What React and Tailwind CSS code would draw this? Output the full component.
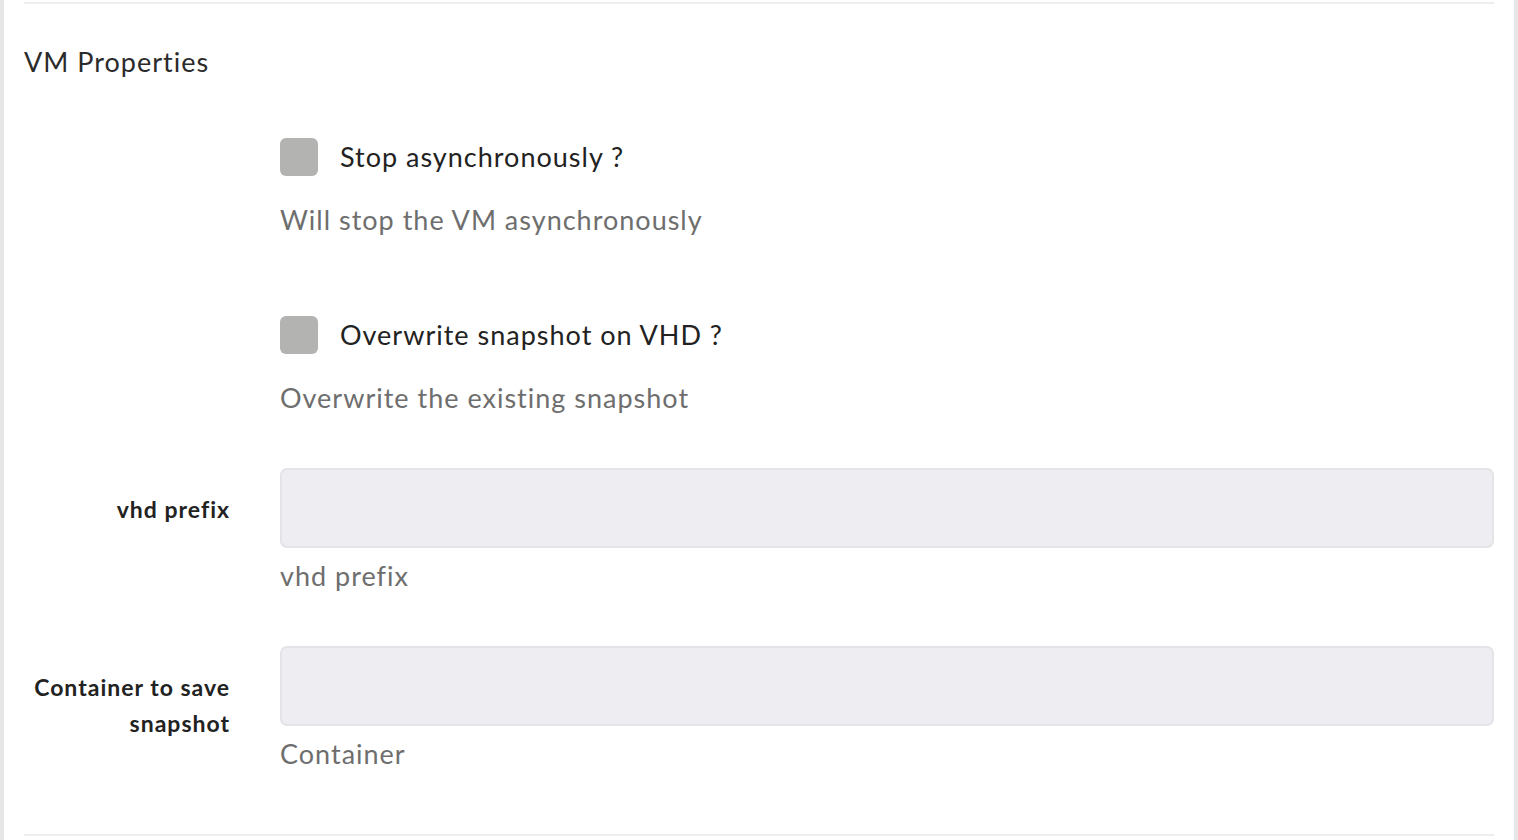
export default function App() {
  const font = { fontFamily: 'Lato, "Open Sans", sans-serif' };

  return (
    <div className="min-h-[840px] bg-white border-l-4 border-r-4 border-[#e6e6e6] px-5 tracking-[1px]" style={font}>
      <div className="pt-[2px]">
        <div className="h-[2px] bg-[#eeeeee]"></div>
      </div>

      {/* VM Properties */}
      <h2 className="mt-[40px] text-[27px] leading-[36px] text-[#2b2b2b]">VM Properties</h2>

      <div className="grid grid-cols-[256px_1fr]">
        {/* Stop asynchronously */}
        <div></div>
        <div className="mt-[58px]">
          <label className="flex items-center gap-[22px]">
            <span className="w-[38px] h-[38px] rounded-[6px] bg-[#b3b3b1] shrink-0"></span>
            <span className="text-[27px] leading-[38px] text-[#222]">Stop asynchronously ?</span>
          </label>
          <p className="mt-[26px] text-[27px] leading-[36px] text-[#6e6e6e]">Will stop the VM asynchronously</p>
        </div>

        {/* Overwrite snapshot */}
        <div></div>
        <div className="mt-[78px]">
          <label className="flex items-center gap-[22px]">
            <span className="w-[38px] h-[38px] rounded-[6px] bg-[#b3b3b1] shrink-0"></span>
            <span className="text-[27px] leading-[38px] text-[#222]">Overwrite snapshot on VHD ?</span>
          </label>
          <p className="mt-[26px] text-[27px] leading-[36px] text-[#6e6e6e]">Overwrite the existing snapshot</p>
        </div>

        {/* vhd prefix */}
        <div className="mt-[52px] pt-[23px] pr-[50px] text-right text-[23px] leading-[36px] font-bold text-[#222]">vhd prefix</div>
        <div className="mt-[52px]">
          <input type="text" className="block w-full h-[80px] rounded-[7px] border-2 border-[#e3e3e8] bg-[#eeeef2] px-4 outline-none" />
          <p className="mt-[10px] text-[27px] leading-[36px] text-[#6e6e6e]">vhd prefix</p>
        </div>

        {/* Container */}
        <div className="mt-[52px] pt-[23px] pr-[50px] text-right text-[23px] leading-[36px] font-bold text-[#222]">Container to save snapshot</div>
        <div className="mt-[52px]">
          <input type="text" className="block w-full h-[80px] rounded-[7px] border-2 border-[#e3e3e8] bg-[#eeeef2] px-4 outline-none" />
          <p className="mt-[10px] text-[27px] leading-[36px] text-[#6e6e6e]">Container</p>
        </div>
      </div>

      <div className="mt-[62px] h-[2px] bg-[#eeeeee]"></div>
    </div>
  );
}
